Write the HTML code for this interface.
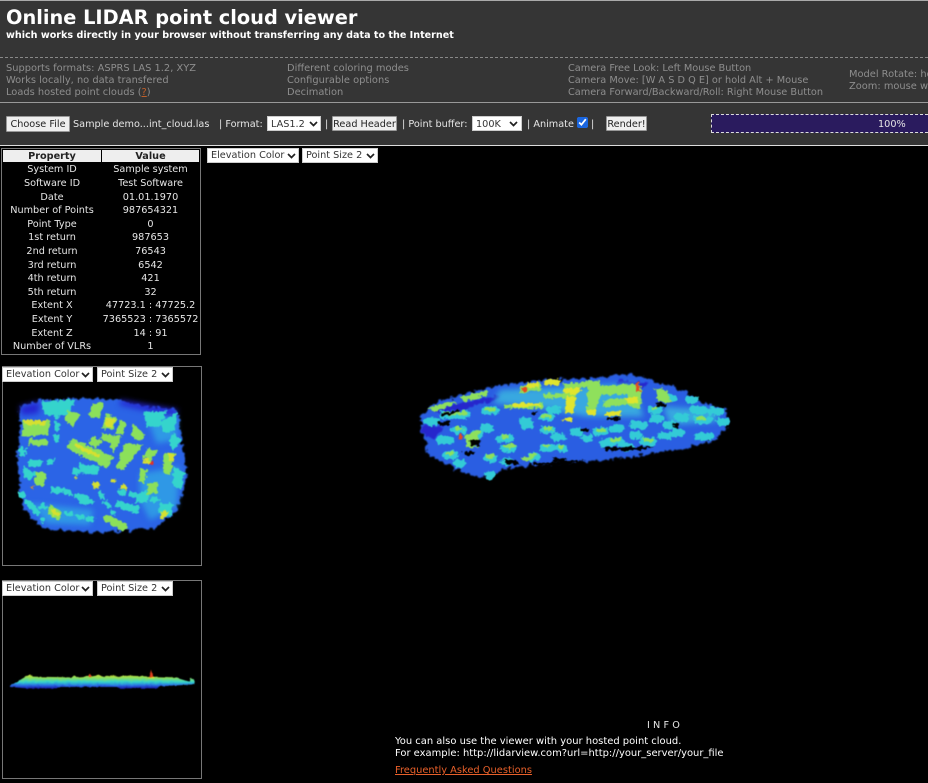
<!DOCTYPE html>
<html><head><meta charset="utf-8"><style>
*{box-sizing:border-box}
html,body{margin:0;padding:0;width:928px;height:783px;overflow:hidden;background:#000;font-family:"DejaVu Sans","Liberation Sans",sans-serif;font-size:9.7px;color:#e6e6e6}
#w{position:absolute;left:0;top:0;width:928px;height:783px;overflow:hidden;filter:blur(.3px)}
.a{position:absolute;white-space:nowrap}
#hdr{position:absolute;left:0;top:0;width:928px;height:146px;background:#353535;border-top:1px solid #aaa;border-bottom:1px solid #ddd}
.g{color:#8e8e8e;line-height:12px;font-size:9.85px}
.t{top:118px!important;line-height:14px}
.s{position:absolute;height:15px;background:#fff;color:#333;border:1px solid #ccc;line-height:13px;padding-left:3px;white-space:nowrap;overflow:hidden}
.s.k{line-height:15px}
.s svg{position:absolute;right:2px;top:4px;width:9px;height:6px}
.b{position:absolute;background:#efefef;color:#222;border:1px solid #999;border-radius:1px;height:15px;line-height:15px;text-align:center;white-space:nowrap;overflow:hidden}
.c{position:absolute;text-align:center;white-space:nowrap;line-height:14px;height:14px}
.p{left:3px;width:98px}.v{left:101px;width:99px}
.box{position:absolute;border:1px solid #777}
</style></head><body><div id="w">
<div id="hdr"></div>
<div class="a" style="left:6px;top:6px;font-size:19.35px;font-weight:bold;color:#fff;line-height:24px">Online LIDAR point cloud viewer</div>
<div class="a" style="left:6px;top:29px;font-size:9.6px;font-weight:bold;color:#fff;line-height:13px">which works directly in your browser without transferring any data to the Internet</div>
<div class="a" style="left:0;top:57px;width:928px;border-top:1px dashed #888"></div>
<div class="a" style="left:0;top:102px;width:928px;border-top:1px solid #999"></div>
<div class="a g" style="left:6px;top:63px">Supports formats: ASPRS LAS 1.2, XYZ<br>Works locally, no data transfered<br>Loads hosted point clouds (<span style="color:#c0602a;text-decoration:underline">?</span>)</div>
<div class="a g" style="left:287px;top:63px">Different coloring modes<br>Configurable options<br>Decimation</div>
<div class="a g" style="left:568px;top:63px;font-size:9.75px">Camera Free Look: Left Mouse Button<br>Camera Move: [W A S D Q E] or hold Alt + Mouse<br>Camera Forward/Backward/Roll: Right Mouse Button</div>
<div class="a g" style="left:849px;top:69px;width:79px;overflow:hidden">Model Rotate: hold Shift + Mouse<br>Zoom: mouse wheel</div>

<div class="b" style="left:6px;top:116px;width:64px;height:16px;line-height:15px">Choose File</div>
<div class="a t" style="left:73px">Sample demo...int_cloud.las</div>
<div class="a t" style="left:219px">| Format:</div>
<div class="s k" style="left:267px;top:116px;width:54px">LAS1.2<svg viewBox="0 0 9 6"><path d="M1 1l3.5 3.5L8 1" fill="none" stroke="#222" stroke-width="1.7"/></svg></div>
<div class="a t" style="left:325px">|</div>
<div class="b" style="left:332px;top:116px;width:65px">Read Header</div>
<div class="a t" style="left:402px">| Point buffer:</div>
<div class="s k" style="left:472px;top:116px;width:50px">100K<svg style="right:3px" viewBox="0 0 9 6"><path d="M1 1l3.5 3.5L8 1" fill="none" stroke="#222" stroke-width="1.7"/></svg></div>
<div class="a t" style="left:527px">| Animate</div>
<input type="checkbox" checked style="position:absolute;left:577px;top:117px;width:11px;height:11px;margin:0;accent-color:#1a66e0">
<div class="a t" style="left:591px">|</div>
<div class="b" style="left:606px;top:116px;width:41px">Render!</div>
<div class="a" style="left:711px;top:114px;width:217px;height:19px;border:1px dashed #ddd;border-right:0;background:#2a1b5e"></div>
<div class="a t" style="left:878px">100%</div>

<div class="box" style="left:1px;top:148px;width:200px;height:207px"></div>
<div class="a" style="left:3px;top:150px;width:98px;height:12px;background:#eee;color:#222;font-weight:bold;text-align:center;line-height:14px;overflow:hidden">Property</div>
<div class="a" style="left:102px;top:150px;width:97px;height:12px;background:#eee;color:#222;font-weight:bold;text-align:center;line-height:14px;overflow:hidden">Value</div>
<div class="c p" style="top:163px">System ID</div><div class="c v" style="top:163px">Sample system</div>
<div class="c p" style="top:177px">Software ID</div><div class="c v" style="top:177px">Test Software</div>
<div class="c p" style="top:190.5px">Date</div><div class="c v" style="top:190.5px">01.01.1970</div>
<div class="c p" style="top:204px">Number of Points</div><div class="c v" style="top:204px">987654321</div>
<div class="c p" style="top:218px">Point Type</div><div class="c v" style="top:218px">0</div>
<div class="c p" style="top:231px">1st return</div><div class="c v" style="top:231px">987653</div>
<div class="c p" style="top:245px">2nd return</div><div class="c v" style="top:245px">76543</div>
<div class="c p" style="top:258.5px">3rd return</div><div class="c v" style="top:258.5px">6542</div>
<div class="c p" style="top:272px">4th return</div><div class="c v" style="top:272px">421</div>
<div class="c p" style="top:285.5px">5th return</div><div class="c v" style="top:285.5px">32</div>
<div class="c p" style="top:299px">Extent X</div><div class="c v" style="top:299px">47723.1 : 47725.2</div>
<div class="c p" style="top:313px">Extent Y</div><div class="c v" style="top:313px">7365523 : 7365572</div>
<div class="c p" style="top:326.5px">Extent Z</div><div class="c v" style="top:326.5px">14 : 91</div>
<div class="c p" style="top:340px">Number of VLRs</div><div class="c v" style="top:340px">1</div>

<div class="box" style="left:2px;top:366px;width:200px;height:200px"></div>
<div class="box" style="left:2px;top:580px;width:200px;height:199px"></div>

<svg width="928" height="783" style="position:absolute;left:0;top:0" xmlns="http://www.w3.org/2000/svg">
<defs>
<filter id="ng" x="-10%" y="-10%" width="120%" height="120%" color-interpolation-filters="sRGB"><feTurbulence type="fractalNoise" baseFrequency=".07" numOctaves="2" seed="4"/><feDisplacementMap in="SourceGraphic" scale="26" xChannelSelector="R" yChannelSelector="G"/><feGaussianBlur stdDeviation="2.2"/></filter>
<filter id="nb" x="-10%" y="-10%" width="120%" height="120%" color-interpolation-filters="sRGB"><feTurbulence type="fractalNoise" baseFrequency=".09" numOctaves="2" seed="9"/><feDisplacementMap in="SourceGraphic" scale="18" xChannelSelector="R" yChannelSelector="G"/><feGaussianBlur stdDeviation="1.8"/></filter>
<filter id="sm" x="-20%" y="-20%" width="140%" height="140%" color-interpolation-filters="sRGB"><feGaussianBlur stdDeviation="9"/></filter>
<filter id="sd" x="-5%" y="-50%" width="110%" height="200%" color-interpolation-filters="sRGB"><feTurbulence type="fractalNoise" baseFrequency=".08" numOctaves="2" seed="2"/><feDisplacementMap in="SourceGraphic" scale="6" xChannelSelector="R" yChannelSelector="G"/><feGaussianBlur stdDeviation="1.4"/></filter>
<linearGradient id="lg" x1="0" y1="0" x2="0" y2="1"><stop offset="0" stop-color="#d8e230"/><stop offset=".25" stop-color="#90e05c"/><stop offset=".55" stop-color="#35d4cc"/><stop offset=".78" stop-color="#2a70e4"/><stop offset="1" stop-color="#1a18a8"/></linearGradient>
</defs>
<!-- main cloud -->
<g transform="translate(400,360) scale(.3333)">
<g filter="url(#ng)">
<path fill="#2a5ee2" d="M62 170L100 130 200 100 300 75 440 60 560 55 690 42 760 62 860 98 885 120 975 148 990 190 945 238 860 262 740 285 600 302 380 316 320 326 250 352 195 340 85 282 78 240 62 210Z"/>
<path fill="#2626cc" d="M62 195L135 200 100 235 70 220Z M110 145L300 105 300 118 115 165Z M650 60L750 68 720 90 650 78Z"/>
</g>
<g filter="url(#sm)">
<path fill="#38a8e0" d="M300 90L700 70 730 170 560 170 400 140 280 130Z M790 140L950 150 950 185 810 195Z"/>
</g>
<g filter="url(#nb)">
<g fill="none" stroke="#33cbd6" stroke-width="24" stroke-linecap="round">
<path d="M255 152h30M450 150h20M130 165h70M85 185h25M370 185h12M430 172h22M700 195h30M755 150h20M800 195h20M835 172h22M890 180h35M165 210h25M225 222h15M300 235h30M430 210h25M375 196h15M465 232h20M590 215h25M630 245h35M730 245h30M785 228h20M825 218h18M895 230h35M310 265h30M430 262h25M140 285h25M262 295h20M475 265h16M395 290h15M172 310h16M265 345h10M312 305h18M610 248h25M675 262h15M120 240h30M640 205h20M700 225h14M520 215h20M555 235h12M250 205h20M760 175h20M930 155h30M960 185h18M870 120h15M880 150h30M800 115h20"/>
</g>
<g fill="none" stroke="#8fe05c" stroke-width="11" stroke-linecap="round">
<path d="M260 148h20M135 160h60M430 168h18M170 205h14M228 216h8M305 230h20M435 205h18M595 210h14M635 240h22M735 240h18M312 258h30M432 257h16M145 280h12M265 288h15M480 260h8M395 285h10M895 175h20M760 145h10"/>
</g>
<path fill="#8fe05c" d="M80 145L140 125 170 130 110 155Z M180 110L260 92 265 105 195 125Z M310 135L425 130 430 145 315 145Z M360 80L420 65 425 90 360 100Z M490 70L600 62 600 80 490 88Z M565 80L720 70 725 100 605 105 585 150 560 150Z M685 90L725 100 720 150 680 135Z M765 85L800 90 815 130 775 125Z M195 225L240 215 230 262 198 262Z M360 295L415 283 380 305Z M430 100L530 100 525 115 430 115Z M610 120L680 115 680 135 610 140Z"/>
<path fill="#e0e52e" d="M430 62L480 58 480 76 435 74Z M490 85L545 85 530 105 490 100Z M500 110L530 110 520 160 495 160Z M620 155L665 152 660 168 615 168Z M562 150L590 148 585 165 560 165Z M490 172L520 172 515 185 490 185Z M380 70L415 65 415 80 380 85Z M680 112L715 110 710 130 680 128Z M340 130L420 130 420 140 340 140Z"/>
<path fill="#000" d="M610 262L760 258 725 272 620 272Z M190 275L225 275 215 285 190 285Z M210 240L245 240 235 258 212 256Z M460 295L500 295 495 305 460 305Z M115 185L150 185 145 195 115 195Z M310 298L350 300 360 315 320 312Z M400 155L415 155 410 165 395 165Z M770 130L800 130 795 140 770 140Z M820 190L840 190 835 205 820 205Z M400 308L560 302 500 316 400 318Z M120 160L180 150 175 158 125 168Z M620 172L660 172 655 180 620 180Z M540 205L570 205 565 215 540 215Z"/>
<path fill="#e64a1e" d="M707 70L720 68 720 95 707 95Z M365 85L382 85 378 95 368 95Z M175 225L188 225 185 240 178 240Z"/>
</g></g>
<!-- top view -->
<g transform="translate(0,360) scale(.3333)">
<g filter="url(#ng)">
<path fill="#2b64e6" d="M60 140L120 120 230 115 350 120 440 140 535 150 545 230 560 350 530 455 465 505 300 518 125 505 68 440 52 320 58 240Z"/>
</g>
<g filter="url(#sm)">
<path fill="#2424d0" d="M60 140L120 125 115 160 65 165Z M360 120L535 150 520 170 360 135Z"/>
<path fill="#2f98e6" d="M420 340L540 320 530 440 450 480 420 420Z M90 430L280 450 270 495 140 490Z M440 170L530 170 530 240 470 250Z"/>
</g>
<g filter="url(#nb)">
<path fill="#35d4cc" d="M125 125L230 118 205 165 135 165Z M150 380L195 385 190 400 155 400Z M240 310L300 320 290 345 240 340Z M350 420L420 440 410 460 345 440Z M430 155L500 155 480 200 440 200Z M480 190L530 155 525 210 490 220Z M85 300L130 300 125 320 85 320Z M140 300L165 295 160 315 140 315Z M220 320L245 325 235 345 215 340Z M240 405L270 410 260 440 240 430Z M410 400L450 390 440 430 405 425Z M480 430L520 430 510 470 475 460Z M520 320L555 340 545 390 520 380Z M520 220L545 240 520 270 505 250Z M70 320L110 340 90 360 70 350Z M60 260L80 265 75 290 55 285Z"/>
<path fill="none" stroke="#35d4cc" stroke-width="16" stroke-linecap="round" stroke-dasharray="12 22" d="M300 400L340 460M360 395L470 420M200 395L280 430M90 440L140 440M200 460L280 480M170 160L170 260M60 400L130 480"/>
<path fill="#8ce05a" d="M70 180L150 180 145 225 65 230Z M85 235L145 240 140 258 85 255Z M205 150L240 165 220 200 190 180Z M280 130L310 130 300 175 265 165Z M320 160L350 175 340 210 305 205Z M360 180L380 190 370 225 345 220Z M400 190L435 225 420 245 390 225Z M305 220L365 230 340 280 330 250 300 235Z M275 225L305 245 290 265 265 250Z M215 235L340 290 320 325 200 265Z M375 250L430 255 370 330 350 320Z M440 265L470 275 450 310 430 290Z M490 280L525 280 510 345 490 340Z M420 325L445 330 430 370 415 360Z M105 335L140 340 130 380 105 375Z M150 435L185 455 180 480 145 465Z M315 460L385 495 370 515 310 480Z M445 370L475 365 470 400 440 405Z"/>
<path fill="#d6e030" d="M75 180L140 180 140 195 75 195Z M320 170L345 175 335 205 315 200Z M280 365L300 370 295 385 280 385Z M335 355L350 360 345 370 330 365Z M365 370L385 380 380 390 360 385Z M225 345L235 350 230 358 222 355Z M155 445L180 460 175 470 155 460Z M505 280L525 285 520 310 505 305Z M480 455L510 455 490 480 480 475Z M430 295L455 300 450 315 430 310Z M230 250L300 285 295 295 225 260Z"/>
<path fill="#e2302a" d="M452 304h10v10h-10z"/><path fill="#e0902a" d="M93 378h8v10h-8z"/>
</g></g>
<!-- side view -->
<g transform="translate(0,575) scale(.3333)" filter="url(#sd)">
<path fill="url(#lg)" d="M30 332L48 322 72 308 85 300 92 300 100 305 215 307 222 302 230 306 265 304 270 298 276 304 300 300 310 306 340 300 355 304 380 302 440 304 525 307 555 316 568 320 570 310 582 313 583 328 480 334 470 340 360 340 350 336 180 336 170 340 80 340 30 336Z"/>
<path fill="#e2401e" d="M449 306L453 284 460 306Z M266 306L270 296 275 306Z"/>
<path fill="#dfe030" d="M445 306L465 306 465 310 445 310Z"/>
</g>
</svg>

<div class="s" style="left:207px;top:148px;width:92px">Elevation Color<svg viewBox="0 0 9 6"><path d="M1 1l3.5 3.5L8 1" fill="none" stroke="#222" stroke-width="1.7"/></svg></div>
<div class="s" style="left:302px;top:148px;width:76px">Point Size 2<svg viewBox="0 0 9 6"><path d="M1 1l3.5 3.5L8 1" fill="none" stroke="#222" stroke-width="1.7"/></svg></div>
<div class="s" style="left:2px;top:367px;width:91px">Elevation Color<svg viewBox="0 0 9 6"><path d="M1 1l3.5 3.5L8 1" fill="none" stroke="#222" stroke-width="1.7"/></svg></div>
<div class="s" style="left:97px;top:367px;width:76px">Point Size 2<svg viewBox="0 0 9 6"><path d="M1 1l3.5 3.5L8 1" fill="none" stroke="#222" stroke-width="1.7"/></svg></div>
<div class="s" style="left:2px;top:581px;width:91px">Elevation Color<svg viewBox="0 0 9 6"><path d="M1 1l3.5 3.5L8 1" fill="none" stroke="#222" stroke-width="1.7"/></svg></div>
<div class="s" style="left:97px;top:581px;width:76px">Point Size 2<svg viewBox="0 0 9 6"><path d="M1 1l3.5 3.5L8 1" fill="none" stroke="#222" stroke-width="1.7"/></svg></div>

<div class="a" style="left:647px;top:719px;letter-spacing:3.2px;line-height:13px">INFO</div>
<div class="a" style="left:395px;top:736px;line-height:12px;color:#fff;font-size:9.95px">You can also use the viewer with your hosted point cloud.<br>For example: http://lidarview.com?url=http://your_server/your_file</div>
<div class="a" style="left:395px;top:765px;line-height:12px;color:#e8602a;text-decoration:underline;font-size:9.85px">Frequently Asked Questions</div>
</div></body></html>
